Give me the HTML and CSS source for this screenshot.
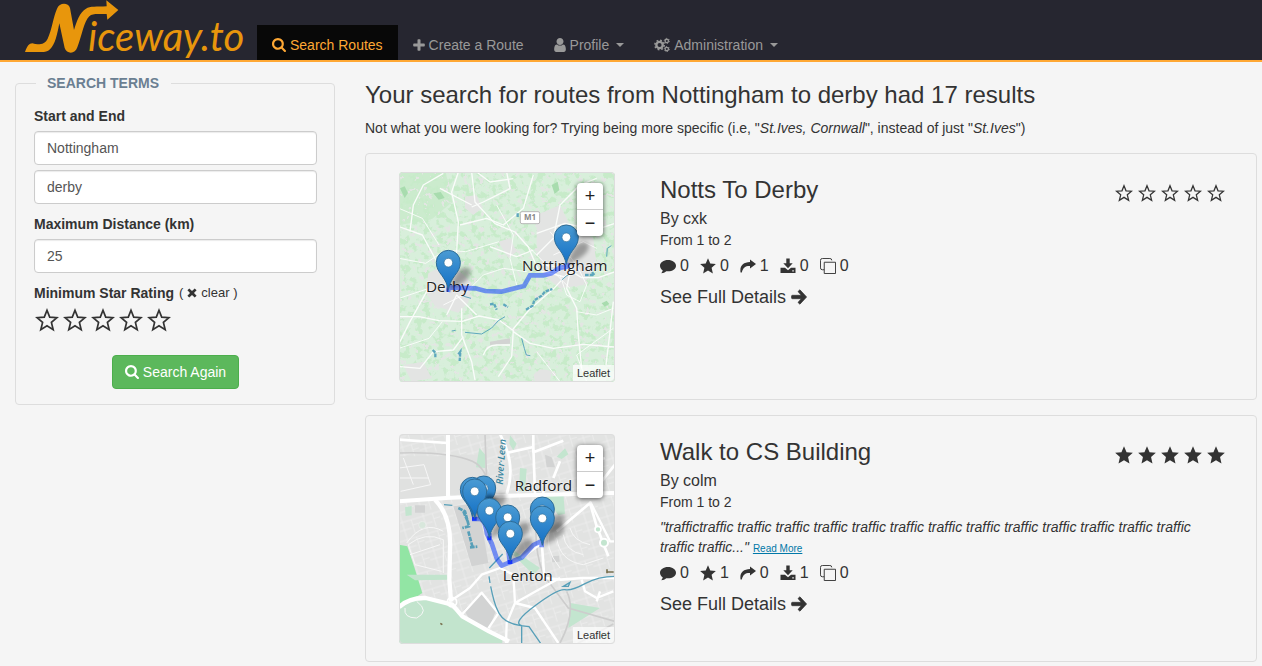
FILE: index.html
```html
<!DOCTYPE html>
<html lang="en">
<head>
<meta charset="utf-8">
<title>Niceway.to - Search Routes</title>
<link rel="stylesheet" href="styles.css">
</head>
<body>
<svg class="defs" width="0" height="0" aria-hidden="true">
  <defs>
    <symbol id="search" viewBox="64 128 1664 1664"><path d="M1216 832q0-185-131.500-316.500t-316.500-131.500-316.500 131.500-131.500 316.500 131.500 316.500 316.500 131.500 316.500-131.500 131.500-316.500zm512 832q0 52-38 90t-90 38q-54 0-90-38l-343-342q-179 124-399 124-143 0-273.500-55.500t-225-150-150-225-55.500-273.500 55.500-273.500 150-225 225-150 273.500-55.500 273.500 55.500 225 150 150 225 55.500 273.500q0 220-124 399l343 343q37 37 37 90z"/></symbol>
    <symbol id="plus" viewBox="0 0 12 12"><path d="M4.500 1q0-.8.8-.8h1.400q.8 0 .8.8v3.500h3.500q.8 0 .8.8v1.400q0 .8-.8.8H7.500V11q0 .8-.8.8H5.300q-.8 0-.8-.8V7.500H1q-.8 0-.8-.8V5.300q0-.8.8-.8h3.500z"/></symbol>
    <symbol id="user" viewBox="256 128 1280 1536"><path d="M1536 1399q0 109-62.500 187t-150.500 78h-854q-88 0-150.500-78t-62.500-187q0-85 8.500-160.500t31.500-152 58.500-131 94-89 134.500-34.500q131 128 313 128t313-128q76 0 134.500 34.500t94 89 58.500 131 31.500 152 8.500 160.500zm-256-887q0 159-112.500 271.500t-271.500 112.500-271.500-112.500-112.500-271.500 112.500-271.500 271.500-112.500 271.500 112.500 112.500 271.500z"/></symbol>
    <symbol id="cogs" viewBox="0 0 15 14">
      <g fill="none" stroke="currentColor">
        <circle cx="5.200" cy="7" r="3" stroke-width="2.200"/>
        <circle cx="5.200" cy="7" r="4.400" stroke-width="1.400" stroke-dasharray="1.700 1.756"/>
        <circle cx="12" cy="3.200" r="1.600" stroke-width="1.200"/>
        <circle cx="12" cy="3.200" r="2.400" stroke-width=".9" stroke-dasharray="1.200 1.313"/>
        <circle cx="12" cy="10.800" r="1.600" stroke-width="1.200"/>
        <circle cx="12" cy="10.800" r="2.400" stroke-width=".9" stroke-dasharray="1.200 1.313"/>
      </g>
    </symbol>
    <symbol id="times" viewBox="0 0 10 10"><path d="M2.300.4 5 3 7.700.4 9.600 2.300 7 5l2.600 2.700-1.900 1.900L5 7 2.300 9.600.4 7.700 3 5 .4 2.300z"/></symbol>
    <symbol id="star" viewBox="0 0 24 24"><path d="M12 .3 15.400 8.300 23.800 9 17.400 14.800 19.300 23.300 12 18.900 4.700 23.300 6.600 14.800.2 9 8.600 8.300z"/></symbol>
    <symbol id="star-o" viewBox="0 0 24 24"><path d="M12 2.300 14.700 9.100 22 9.600 16.400 14.400 18.200 21.700 12 17.800 5.800 21.700 7.600 14.400 2 9.600 9.300 9.100z" fill="none" stroke="currentColor" stroke-width="1.700"/></symbol>
    <symbol id="comment" viewBox="0 0 16 16"><path d="M8 2c4.500 0 8 2.500 8 5.700s-3.500 5.600-8 5.600q-.9 0-1.700-.1C4.900 14.400 3.300 15 1.300 15.200c.8-.8 1.300-1.700 1.400-2.900C1 11.200 0 9.600 0 7.700 0 4.500 3.500 2 8 2z"/></symbol>
    <symbol id="share" viewBox="0 0 16 16"><path d="M10 1.500 16 6l-6 4.600V8C5.500 7.800 3.200 9.500 1.800 14.500H.6C-.6 8 3 4.200 10 4z"/></symbol>
    <symbol id="download" viewBox="0 0 16 16"><path d="M6.300.6h3.400v4.600h3L8 10.300 3.300 5.200h3zM.5 9.700H5l3 2.600 3-2.600h4.500V15H.5zm11.800 2.500v1.200h1.500v-1.200z" fill-rule="evenodd"/></symbol>
    <symbol id="copy" viewBox="0 0 17 17"><path d="M4.500 12.500h-2q-2 0-2-2v-8q0-2 2-2h8q2 0 2 2M4.500 4.500h12v12h-12z" fill="none" stroke="currentColor" stroke-width="1"/></symbol>
    <symbol id="arrow" viewBox="0 0 16 16"><path d="M7 2.600 8.900.8 15.600 8l-6.700 7.200L7 13.400l3.300-3.700H1.500Q.5 9.700.5 8.700V7.300q0-1 1-1h8.800z" stroke="currentColor" stroke-width=".7" stroke-linejoin="round"/></symbol>
    <linearGradient id="pinfill" x1="0" y1="0" x2="0" y2="1"><stop offset="0" stop-color="#4a9bd3"/><stop offset="1" stop-color="#126fc6"/></linearGradient>
    <filter id="soft" x="-30%" y="-30%" width="160%" height="160%"><feGaussianBlur stdDeviation="7"/></filter>
    <g id="pin">
      <path d="M0 0Q20-60 45-68 78-72 62-40 45-18 0 0z" fill="#000" opacity=".32" filter="url(#soft)"/>
      <path d="M0-2C-3-18-9-30-19-44-30-58-36-68-36-84A36 36 0 0 1 36-84C36-68 30-58 19-44 9-30 3-18 0-2z" fill="url(#pinfill)" stroke="#2e6c97" stroke-width="3"/>
      <circle cy="-83" r="13" fill="#fff" stroke="#2e6c97" stroke-width="2"/>
    </g>
    <filter id="woods" x="0" y="0" width="100%" height="100%" color-interpolation-filters="sRGB"><feTurbulence type="fractalNoise" baseFrequency=".05" numOctaves="3" seed="8"/><feColorMatrix values="0 0 0 0 .78  0 0 0 0 .92  0 0 0 0 .79  9 0 0 0 -4.600"/></filter>
    <filter id="towns" x="0" y="0" width="100%" height="100%" color-interpolation-filters="sRGB"><feTurbulence type="fractalNoise" baseFrequency=".06" numOctaves="3" seed="21"/><feColorMatrix values="0 0 0 0 .89  0 0 0 0 .9  0 0 0 0 .89  0 14 0 0 -8.900"/></filter>
    <pattern id="streets" width="66" height="54" patternUnits="userSpaceOnUse" patternTransform="rotate(-17)"><path d="M0 12h66M0 36h40M18 0v54M46 12v42M46 28h20" fill="none" stroke="#f0f0f0" stroke-width="2"/></pattern>
  </defs>
</svg>

<header class="navbar">
  <a class="brand" href="#" aria-label="Niceway.to">
    <svg class="logo" viewBox="0 0 771 180">
      <path d="M75 156C82 138 87 130 97 130 116 137 136 132 143 116 156 88 160 50 171 26 178 7 205 7 210 24L222 90C230 63 240 36 258 26 270 18 290 21 320 19L319 1 355 30 322 59 320 42C295 43 278 39 268 49 252 63 246 106 232 142 226 163 200 163 194 144L178 70C172 102 165 135 150 148 140 158 128 156 110 156z"/>
      <text x="264" y="152">iceway.to</text>
    </svg>
  </a>
  <nav class="menu">
    <a class="item active" href="#"><svg class="i14"><use href="#search"/></svg>Search Routes</a>
    <a class="item" href="#"><svg class="i12"><use href="#plus"/></svg>Create a Route</a>
    <a class="item" href="#"><svg class="i12"><use href="#user"/></svg>Profile<span class="caret"></span></a>
    <a class="item" href="#"><svg class="i16"><use href="#cogs"/></svg>Administration<span class="caret"></span></a>
  </nav>
</header>

<div class="page">
  <form class="sidebar">
    <fieldset class="terms">
      <legend>SEARCH TERMS</legend>
      <label class="name" for="start">Start and End</label>
      <input class="field" id="start" type="text" value="Nottingham">
      <input class="field" type="text" value="derby" aria-label="End">
      <label class="name" for="distance">Maximum Distance (km)</label>
      <input class="field" id="distance" type="text" value="25">
      <div class="name minimum">Minimum Star Rating <button class="clear" type="button">( <svg class="i10"><use href="#times"/></svg> clear )</button></div>
      <div class="rating">
        <label><input type="radio" name="stars" aria-label="1 star"><svg><use href="#star-o"/></svg></label>
        <label><input type="radio" name="stars" aria-label="2 stars"><svg><use href="#star-o"/></svg></label>
        <label><input type="radio" name="stars" aria-label="3 stars"><svg><use href="#star-o"/></svg></label>
        <label><input type="radio" name="stars" aria-label="4 stars"><svg><use href="#star-o"/></svg></label>
        <label><input type="radio" name="stars" aria-label="5 stars"><svg><use href="#star-o"/></svg></label>
      </div>
      <button class="submit" type="button"><svg class="i14"><use href="#search"/></svg>Search Again</button>
    </fieldset>
  </form>

  <main class="results">
    <h1>Your search for routes from Nottingham to derby had 17 results</h1>
    <p class="hint">Not what you were looking for? Trying being more specific (i.e, "<em>St.Ives, Cornwall</em>", instead of just "<em>St.Ives</em>")</p>

    <article class="card">
      <div class="map">
        <svg class="tiles" viewBox="27 21 648 630">
          <rect x="27" y="21" width="648" height="630" fill="#d8efdb"/>
          <path d="M27 21h140l20 90-60 50-100 20z" fill="#cbebcd"/>
          <rect x="27" y="21" width="648" height="630" filter="url(#woods)"/>
          <rect x="27" y="21" width="648" height="630" filter="url(#towns)"/>
          <g fill="#e3e4e3">
            <path d="M115 325l40-22 50 12 40 38-10 60-30 30-70-20-28-40z"/>
            <path d="M440 150l70-30 30 60 70 40 10 80-40 60-70 10-50-40-20-90z"/>
            <path d="M225 95l35-5 15 40-25 20-25-20zM325 230l35-10 20 40-25 20zM430 630l20-18 35 5-5 33h-45zM40 600l60-10 25 50-60 10z"/>
            <path d="M300 530l60-10v16l-60 4z" fill="#d2d3d2"/>
          </g>
          <path d="M485 60l18-10 5 25-14 12zM130 85l22-4 12 18-18 5zM30 70l14-6 10 20-10 15zM635 415l15-8 8 10-14 8z" fill="#a8dcae"/>
          <g fill="none" stroke="#fafcfa" stroke-width="4" stroke-linejoin="round">
            <path d="M27 185l70 25 38 70 40 60M27 455l60 0 60 12 70 2 50-16 60 12 40 30 50-60 75-65 60-65M205 21l-20 60 20 90-5 90-30 70M60 200l10-80 30-60 60-35M245 21l10 90 60 65 60 25 40 45 30 70 80 20" />
            <path d="M170 450l30-60 60 60M115 370l-55 100-30 60M215 430v80l30 80 10 55M370 495l-5 80-40 60M370 500l50 35 70 15 90-12 92 8M540 320l-10 50 30 60 5 80 10 100M670 410l-10 90-12 100M440 270l50-50 20-100 60-60 50-20M350 21l10 50-80 40-35 15M150 70l95 50M210 180l80-20 50 20 60-50 30-100M675 320l-50 18-50 0-50-30-80-10"/>
            <path d="M30 605l60 5 40-50 60-5 30-40M280 570q10-30 40-30h40M260 21l40 30 70-10M675 175l-60 20-90-20-85 30M300 245l80 30 50-20"/>
          </g>
          <g fill="none" stroke="#fff" stroke-width="3" opacity=".8"><path d="M27 280l80 15 60-40 60 5 100-30M27 400l90-30M410 240l130 130M480 200l80 100 30 60-20 50-40-20-20-60M490 270l90-40 40 20M160 420l60-30 60-60 60-20 70 10M27 550l90-30 40-50M440 560l70 90M590 650l-30-80 110-80M560 440l60 10 50-20M320 120l50 90-10 70 20 80M27 130l70 30 50 80"/></g>
          <g fill="none" stroke="#5da7bd" stroke-width="4">
            <path d="M225 502l50 5 30-18 20-22 20-12M395 520l8 30 6 20 12 2M650 275l2-25 12-8M515 345l14-12 8-5M185 498l12-2M215 392l28 8" stroke-width="3"/>
            <path d="M408 434l20-12 5-16 22-14 10-12 22-8M300 418l12-2 8 18M128 555l8 8v14M205 568l6-8-2 28M585 330l28 0-8-10M383 145v14M340 418l14 8" stroke-width="7" stroke-dasharray="11 3"/>
          </g>
          <rect x="391" y="140" width="58" height="36" rx="5" fill="#fff" stroke="#b8b8b8" stroke-width="3"/>
          <text class="road" x="420" y="166">M1</text>
          <text class="place" x="108" y="382">Derby</text>
          <text class="place" x="396" y="319">Nottingham</text>
          <path d="M174 381l2-14 80 3 30 8 48 2 68-17 18-32 40 0 24-6 24-16 23-4v-12" fill="none" stroke="#0033ff" stroke-opacity=".5" stroke-width="14"/>
          <use href="#pin" x="175" y="376"/><use href="#pin" x="529" y="300"/>
        </svg>
        <div class="zoom"><button type="button">+</button><button type="button">−</button></div>
        <a class="credit" href="#">Leaflet</a>
      </div>
      <div class="info">
        <div class="head">
          <h2>Notts To Derby</h2>
          <div class="score" role="img" aria-label="0 of 5 stars"><svg><use href="#star-o"/></svg><svg><use href="#star-o"/></svg><svg><use href="#star-o"/></svg><svg><use href="#star-o"/></svg><svg><use href="#star-o"/></svg></div>
        </div>
        <div class="by">By cxk</div>
        <div class="span">From 1 to 2</div>
        <ul class="stats">
          <li><svg><use href="#comment"/></svg>0</li><li><svg><use href="#star"/></svg>0</li><li><svg><use href="#share"/></svg>1</li><li><svg><use href="#download"/></svg>0</li><li><svg><use href="#copy"/></svg>0</li>
        </ul>
        <a class="more" href="#">See Full Details<svg class="i16"><use href="#arrow"/></svg></a>
      </div>
    </article>

    <article class="card">
      <div class="map">
        <svg class="tiles" viewBox="27 18 648 630">
          <rect x="27" y="18" width="648" height="630" fill="#e2e3e2"/>
          <rect x="27" y="18" width="648" height="630" fill="url(#streets)"/>
          <path d="M27 85h145v130H27zM180 80h90l30 60-5 60H180z" fill="#e0e1e0"/>
          <path d="M27 350l25 5 20 60 25 80-70 45z" fill="#92e5a4"/>
          <path d="M50 440l120 0 5 15-100 2zM27 540l40-20 70-8 50 30 150 95v11H27z" fill="#c2e4cd"/>
          <path d="M45 238l20-4v28l-18 2zM268 60l18 20v40l-28-2zM390 120l20 2-5 70-18-4zM540 525l90 15-95 60zM250 340l22 5 4 60-30-5zM360 22l20 25-10 20-12-20zM465 205l55-8 5 60-20 5zM375 370l75 50-20 20-60-60zM632 615h20v14h-20zM500 86l25-25 10 18-20 14z" fill="#c3e5cf"/>
          <path d="M190 235l75-10 30 180-50 10zM75 232h30v22H75zM465 80l20 8 10 30-25 0zM222 545l55-50 42 50-25 65-55-35zM485 385l22-2 2 18-22 2z" fill="#d2d3d3"/>
          <path d="M50 345q50-70 110-35M55 350q50-40 105-15v100M55 350l20 60 80 20M60 380l90-30M500 330q10 70 80 80l60-20M480 300q-20 60 30 120M520 320q5 50 60 60M540 300q10 40 60 50M27 120l75-10 20 60-90 20M40 90l30 80M27 150l90 0M80 520q40 30 0 50-40 0-35-30" fill="none" stroke="#f6f6f6" stroke-width="3"/>
          <g fill="none" stroke="#cdcdcd" stroke-width="5"><path d="M285 18l5 140 10 70 0 120M27 75q150-5 220 25 45 20 55 100M440 260q-10 100 20 180l75 100 140 40M530 490q30 60-20 155M560 648l110-60" /></g>
          <g fill="none" stroke="#fff" stroke-linejoin="round">
            <path d="M174 18v190M27 220l140-10 125-5 380-10" stroke-width="12"/>
            <path d="M135 215q50 50 45 150l-2 90 5 65M27 538q30-30 80-28l80 20 30 35 80 45 60 30" stroke-width="13"/>
            <path d="M27 35l145 10M330 18q50 90 20 180M350 75l80-18 5 140M430 18v55l90-35M460 190l0 90-5 60 8 110 50 5 65-5 95 0M500 310l100-85 20 70 35 90M455 345l-60 45M510 100l-20 50M675 110l-40 50-50-50 60-20" stroke-width="8"/>
            <path d="M180 520l60-40 35-40 55-20 40 20 5 85 60 15 70 105M215 560l60-66 50 62-30 45M375 525l-25 60 -2 60M510 450l-55 30-80 45M600 220l60 120 15 0M575 455l10 35 35 20 50-20M620 520l10-30" stroke-width="7"/>
            <circle cx="642" cy="344" r="12" stroke-width="6" fill="#c3e5cf"/><circle cx="624" cy="304" r="9" stroke-width="5" fill="#c3e5cf"/><circle cx="186" cy="522" r="14" stroke-width="5"/>
            <circle cx="97" cy="291" r="11" stroke="#eee" fill="#d8e7dc" stroke-width="2"/>
          </g>
          <g fill="none" stroke="#579fb8" stroke-width="4">
            <path d="M675 445q-50 0-90 22t-60 18-90 48-40 60v56M302 475q10 50 20 70 15 40 70 48l25 3 35 50M162 230l25 2M300 465l-3-20M298 420l40-42M520 475l20-12-5 12z"/>
            <path d="M205 240l20 10 12 45-20 5M235 310l12 45M240 358l22-2M220 250l15 35" stroke-width="8" stroke-dasharray="14 3"/>
          </g>
          <path d="M649 432h22M651 424v12M151 586l6 4" stroke="#776f4d" stroke-width="5"/>
          <text class="river" x="338" y="170" transform="rotate(-86 338 170)">River·Leen</text>
          <text class="place" x="374" y="188">Radford</text>
          <text class="place" x="338" y="458">Lenton</text>
          <path d="M246 273h25q15 5 20 45l14 28 15 45 15 22 60-24 35-38 25-12v19M355 365l5 42M298 335v-20" fill="none" stroke="#0033ff" stroke-opacity=".5" stroke-width="14" stroke-linejoin="round"/>
          <path d="M246 272h14M292 331h12M353 402h14" stroke="#1838ff" stroke-width="12"/>
          <use href="#pin" x="281" y="264"/><use href="#pin" x="247" y="268"/><use href="#pin" x="254" y="273"/><use href="#pin" x="298" y="331"/><use href="#pin" x="353" y="351"/><use href="#pin" x="361" y="400"/><use href="#pin" x="457" y="327"/><use href="#pin" x="457" y="354"/>
        </svg>
        <div class="zoom"><button type="button">+</button><button type="button">−</button></div>
        <a class="credit" href="#">Leaflet</a>
      </div>
      <div class="info">
        <div class="head">
          <h2>Walk to CS Building</h2>
          <div class="score" role="img" aria-label="5 of 5 stars"><svg><use href="#star"/></svg><svg><use href="#star"/></svg><svg><use href="#star"/></svg><svg><use href="#star"/></svg><svg><use href="#star"/></svg></div>
        </div>
        <div class="by">By colm</div>
        <div class="span">From 1 to 2</div>
        <p class="quote"><em>"traffictraffic traffic traffic traffic traffic traffic traffic traffic traffic traffic traffic traffic traffic traffic traffic..."</em> <a href="#">Read More</a></p>
        <ul class="stats">
          <li><svg><use href="#comment"/></svg>0</li><li><svg><use href="#star"/></svg>1</li><li><svg><use href="#share"/></svg>0</li><li><svg><use href="#download"/></svg>1</li><li><svg><use href="#copy"/></svg>0</li>
        </ul>
        <a class="more" href="#">See Full Details<svg class="i16"><use href="#arrow"/></svg></a>
      </div>
    </article>
  </main>
</div>
</body>
</html>
```
FILE: styles.css
```css
* { box-sizing: border-box; }
body {
  margin: 0;
  background: #f5f5f5;
  color: #333;
  font: 14px/20px "Liberation Sans", Arial, sans-serif;
}
h1, h2, p, ul { margin: 0; padding: 0; font-weight: 400; }
a { color: inherit; text-decoration: none; }
svg { fill: currentColor; flex: none; }
button, input { font: inherit; }
.defs { position: absolute; }
.i10 { width: 10px; height: 10px; }
.i12 { width: 12px; height: 14px; }
.i14 { width: 14px; height: 14px; }
.i16 { width: 16px; height: 16px; }

.navbar {
  display: flex;
  align-items: flex-end;
  height: 62px;
  background: #262630;
  border-bottom: 2px solid #ffa834;
}
.brand { color: #e8960c; }
.logo { display: block; width: 257px; height: 60px; }
.logo text { font: italic 120px Lato, sans-serif; }
.menu { display: flex; }
.item {
  display: flex;
  align-items: center;
  gap: 4px;
  height: 35px;
  padding: 5px 15px 0;
  color: #999;
  white-space: nowrap;
}
.item.active { background: #080808; color: #ffa834; }
.caret {
  margin-left: 3px;
  border: 4px solid transparent;
  border-top-color: currentColor;
  border-bottom: 0;
}

.page { display: flex; align-items: flex-start; gap: 30px; padding: 11px 5px 4px 15px; }
.sidebar { flex: 0 0 320px; }
.terms {
  display: flex;
  flex-direction: column;
  margin: 0;
  padding: 13px 17px 15px 18px;
  border: 1px solid #ddd;
  border-radius: 4px;
}
.terms legend {
  margin-left: 2px;
  padding: 0 12px 0 11px;
  color: #6b7f92;
  font-weight: 700;
}
.name { display: block; margin-bottom: 5px; font-weight: 700; }
.field {
  display: block;
  width: 100%;
  height: 34px;
  margin-bottom: 5px;
  padding: 6px 12px;
  border: 1px solid #ccc;
  border-radius: 4px;
  background: #fff;
  color: #555;
  box-shadow: inset 0 1px 1px rgba(0, 0, 0, .08);
}
.field + .name { margin-top: 5px; }
.minimum { display: flex; align-items: center; gap: 5px; }
.clear {
  display: flex;
  align-items: center;
  gap: 4px;
  padding: 0;
  border: 0;
  background: none;
  color: inherit;
  font-weight: 400;
  font-size: 13px;
}
.rating { display: flex; gap: 4px; padding-left: 1px; }
.rating label { position: relative; display: block; height: 24px; }
.rating input { position: absolute; inset: 0; margin: 0; opacity: 0; }
.rating svg { display: block; width: 24px; height: 24px; }
.submit {
  display: flex;
  align-items: center;
  align-self: center;
  gap: 4px;
  height: 34px;
  margin-top: 23px;
  padding: 0 12px;
  border: 1px solid #4cae4c;
  border-radius: 4px;
  background: #5cb85c;
  color: #fff;
}

.results { flex: 1; min-width: 0; padding-top: 9px; }
h1 { font-size: 24px; line-height: 26px; }
.hint { margin: 10px 0 15px; }
.card {
  display: flex;
  align-items: flex-start;
  gap: 45px;
  margin-bottom: 15px;
  padding: 18px 31px 17px 33px;
  border: 1px solid #ddd;
  border-radius: 4px;
}
.map {
  position: relative;
  flex: 0 0 216px;
  overflow: hidden;
  border-radius: 4px;
}
.tiles { display: block; width: 100%; height: auto; }
.map::after {
  content: "";
  position: absolute;
  inset: 0;
  border: 1px solid #ddd;
  border-radius: 4px;
  pointer-events: none;
}
.place {
  fill: #222;
  stroke: #fff;
  stroke-opacity: .5;
  stroke-width: 4px;
  paint-order: stroke;
  font: 46px "Open Sans", sans-serif;
}
.road { fill: #888; font: 700 24px "Noto Sans", sans-serif; text-anchor: middle; }
.river { fill: #3a86a0; font: italic 600 29px "Open Sans", sans-serif; }
.zoom {
  position: absolute;
  top: 11px;
  right: 12px;
  width: 26px;
  border-radius: 4px;
  background: #fff;
  box-shadow: 0 1px 5px rgba(0, 0, 0, .65);
}
.zoom button {
  display: block;
  width: 100%;
  height: 26px;
  padding: 0;
  border: 0;
  background: none;
  color: #222;
  font-size: 18px;
}
.zoom button + button { height: 27px; border-top: 1px solid #ccc; }
.credit {
  position: absolute;
  right: 1px;
  bottom: 1px;
  padding: 0 4px;
  background: rgba(255, 255, 255, .7);
  font-size: 11px;
  line-height: 16px;
}

.info { flex: 1; min-width: 0; padding-top: 5px; }
.head { display: flex; justify-content: space-between; align-items: flex-start; }
h2 { font-size: 24px; line-height: 26px; }
.score { display: flex; gap: 5px; padding-top: 7px; }
.score svg { width: 18px; height: 18px; }
.by { margin-top: 7px; font-size: 16px; line-height: 18px; }
.span { margin-top: 2px; }
.quote { margin-top: 5px; }
.quote a {
  color: #0078a8;
  font-size: 10px;
  line-height: 10px;
  text-decoration: underline;
}
.stats {
  display: flex;
  gap: 11px;
  margin-top: 6px;
  list-style: none;
  font-size: 16px;
}
.stats li { display: flex; align-items: center; gap: 4px; }
.stats svg { width: 16px; height: 16px; }
.more {
  display: flex;
  align-items: center;
  gap: 5px;
  margin-top: 11px;
  font-size: 18px;
}
```
